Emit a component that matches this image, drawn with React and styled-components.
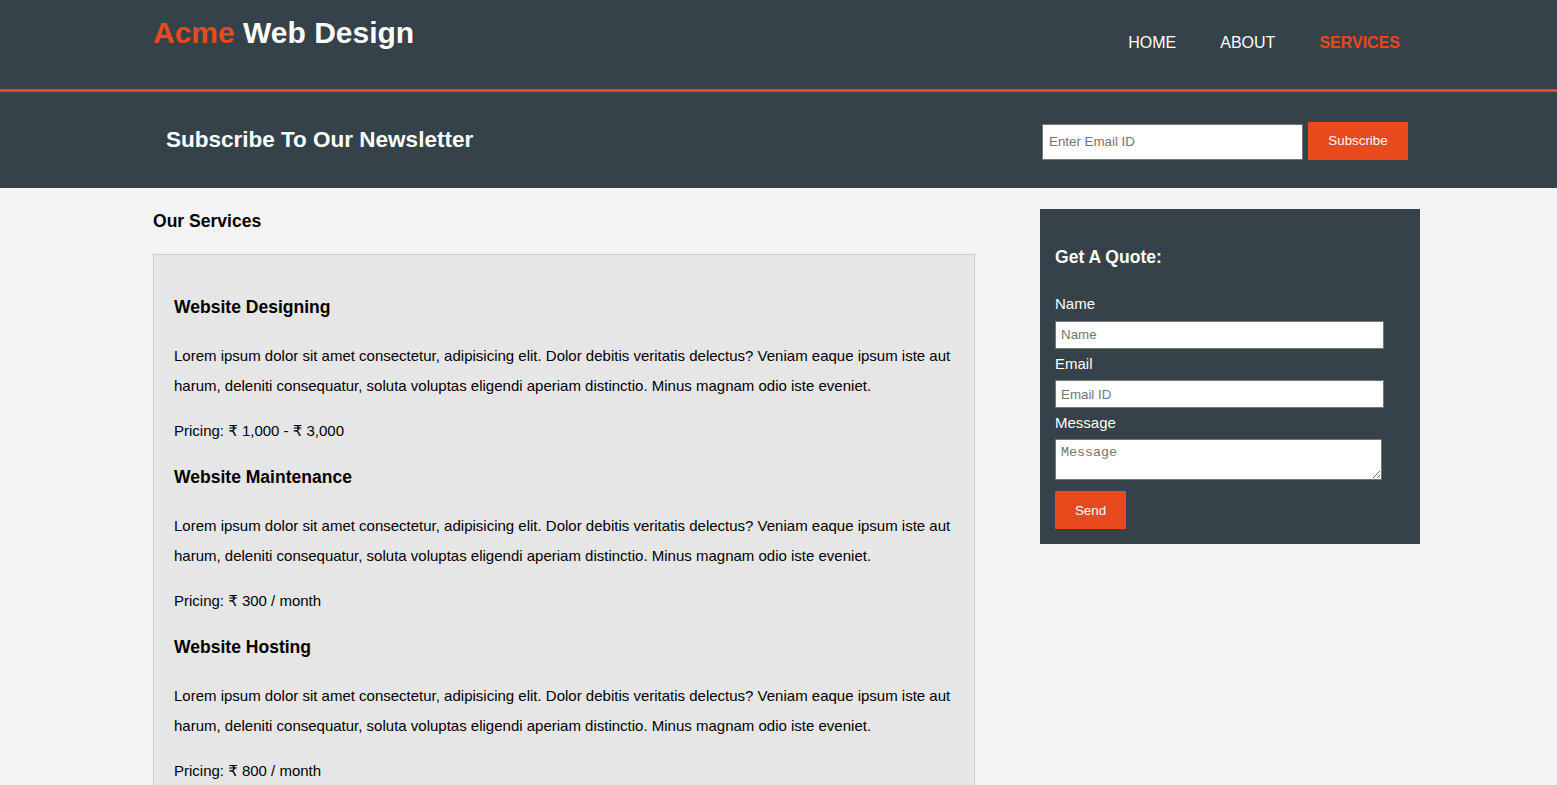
import React from 'react'
import styled, { createGlobalStyle } from 'styled-components'

const Global = createGlobalStyle`
body {
  margin: 0;
  background: #f4f4f4;
  font: 15px/30px "Liberation Sans", Arial, "DejaVu Sans", sans-serif;
  color: #000;
}
`

const Container = styled.div`
width: 1267px;
margin-left: 153px;
box-sizing: border-box;
`

const Header = styled.header`
background: #35424a;
color: #fff;
height: 89px;
border-bottom: 3px solid #e8491d;
`

const HeaderInner = styled(Container)`
display: flex;
justify-content: space-between;
align-items: flex-start;
padding: 18px 20px 0 0;
`

const Logo = styled.h1`
margin: 0;
font-size: 30px;
line-height: 30px;
font-weight: bold;
span { color: #e8491d; }
`

const Menu = styled.ul`
list-style: none;
display: flex;
gap: 44px;
margin: 10px 0 0;
padding: 0;
`

const MenuLink = styled.a`
color: ${p => (p.$current ? '#e8491d' : '#fff')};
font-weight: ${p => (p.$current ? 'bold' : 'normal')};
text-decoration: none;
text-transform: uppercase;
font-size: 16px;
`

const Newsletter = styled.section`
background: #35424a;
color: #fff;
`

const NewsInner = styled(Container)`
height: 96px;
display: flex;
justify-content: space-between;
align-items: center;
padding: 0 12px 0 13px;
`

const NewsTitle = styled.h2`
margin: 0;
font-size: 22.5px;
`

const NewsForm = styled.form`
display: flex;
align-items: flex-end;
gap: 5px;
margin-top: 1px;
`

const EmailBox = styled.input`
box-sizing: border-box;
width: 261px;
height: 36px;
padding: 4px 6px;
border: 1px solid #767676;
font: 13.33px "Liberation Sans", Arial, sans-serif;
::placeholder { color: #757575; }
`

const OrangeButton = styled.button`
height: 38px;
width: ${p => p.$w}px;
background: #e8491d;
border: 0;
color: #fff;
font: 13.33px "Liberation Sans", Arial, sans-serif;
padding: 0;
`

const Main = styled(Container)`
display: flex;
justify-content: space-between;
align-items: flex-start;
`

const MainCol = styled.article`
width: 822px;
`

const Heading = styled.h3`
font-size: 17.55px;
line-height: 30px;
margin: 16.5px 0 18.5px;
`

const PageTitle = styled(Heading)`
margin: 18px 0;
`

const ServiceList = styled.ul`
list-style: none;
margin: 0;
background: #e6e6e6;
border: 1px solid #ccc;
padding: 20.5px 20px 0;
`

const Service = styled.li``

const Text = styled.p`
margin: 15px 0;
`

const Sidebar = styled.aside`
width: 380px;
margin-top: 21px;
background: #35424a;
color: #fff;
padding: 15px;
box-sizing: border-box;
`

const QuoteForm = styled.form`
display: flex;
flex-direction: column;
align-items: flex-start;
`

const QuoteTitle = styled(Heading)`
margin: 17.5px 0;
`

const Label = styled.label`
display: block;
height: 30px;
`

const Field = styled.input`
box-sizing: border-box;
width: 329px;
height: 28px;
margin: 1.5px 0 0;
padding: 5px;
border: 1px solid #767676;
font: 13.33px "Liberation Sans", Arial, sans-serif;
::placeholder { color: #757575; }
`

const Area = styled.textarea`
box-sizing: border-box;
width: 327px;
height: 41px;
margin: 1px 0 11px;
padding: 5px;
border: 1px solid #767676;
font: 13.33px "Liberation Mono", "DejaVu Sans Mono", monospace;
::placeholder { color: #757575; }
`

const services = [
  { name: 'Website Designing', price: 'Pricing: ₹ 1,000 - ₹ 3,000' },
  { name: 'Website Maintenance', price: 'Pricing: ₹ 300 / month' },
  { name: 'Website Hosting', price: 'Pricing: ₹ 800 / month' },
]

const lorem = 'Lorem ipsum dolor sit amet consectetur, adipisicing elit. Dolor debitis veritatis delectus? Veniam eaque ipsum iste aut harum, deleniti consequatur, soluta voluptas eligendi aperiam distinctio. Minus magnam odio iste eveniet.'

const App = () => {
  return (
    <>
      <Global />
      <Header>
        <HeaderInner>
          <Logo><span>Acme</span> Web Design</Logo>
          <nav>
            <Menu>
              <li><MenuLink href="#">Home</MenuLink></li>
              <li><MenuLink href="#">About</MenuLink></li>
              <li><MenuLink href="#" $current>Services</MenuLink></li>
            </Menu>
          </nav>
        </HeaderInner>
      </Header>
      <Newsletter>
        <NewsInner>
          <NewsTitle>Subscribe To Our Newsletter</NewsTitle>
          <NewsForm onSubmit={e => e.preventDefault()}>
            <EmailBox type="email" placeholder="Enter Email ID" />
            <OrangeButton type="submit" $w={100}>Subscribe</OrangeButton>
          </NewsForm>
        </NewsInner>
      </Newsletter>
      <Main>
        <MainCol>
          <PageTitle>Our Services</PageTitle>
          <ServiceList>
            {services.map(s => (
              <Service key={s.name}>
                <Heading>{s.name}</Heading>
                <Text>{lorem}</Text>
                <Text>{s.price}</Text>
              </Service>
            ))}
          </ServiceList>
        </MainCol>
        <Sidebar>
          <QuoteForm onSubmit={e => e.preventDefault()}>
            <QuoteTitle>Get A Quote:</QuoteTitle>
            <Label>Name</Label>
            <Field type="text" placeholder="Name" />
            <Label>Email</Label>
            <Field type="email" placeholder="Email ID" />
            <Label>Message</Label>
            <Area placeholder="Message" />
            <OrangeButton type="submit" $w={71}>Send</OrangeButton>
          </QuoteForm>
        </Sidebar>
      </Main>
    </>
  )
}

export default App
